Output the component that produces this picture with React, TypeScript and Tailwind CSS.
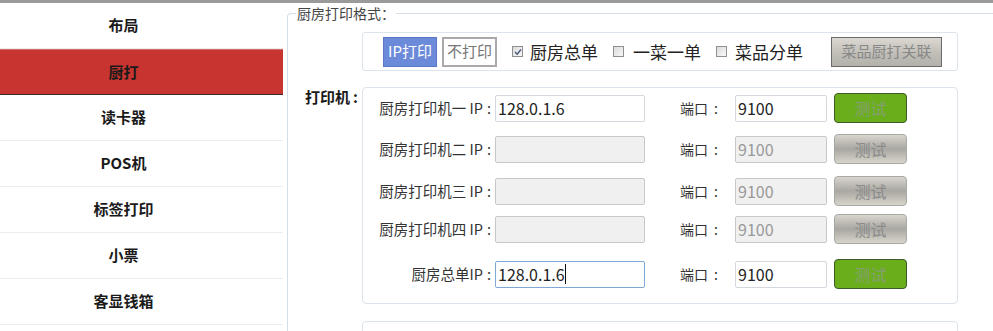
import React from "react";

const MENU = ["布局", "厨打", "读卡器", "POS机", "标签打印", "小票", "客显钱箱"];

type Row = {
  label: string;
  ip: string;
  port: string;
  enabled: boolean;
  focused?: boolean;
  mt: string;
};

const ROWS: Row[] = [
  { label: "厨房打印机一 IP", ip: "128.0.1.6", port: "9100", enabled: true, mt: "mt-[5px]" },
  { label: "厨房打印机二 IP", ip: "", port: "9100", enabled: false, mt: "mt-[11px]" },
  { label: "厨房打印机三 IP", ip: "", port: "9100", enabled: false, mt: "mt-[12px]" },
  { label: "厨房打印机四 IP", ip: "", port: "9100", enabled: false, mt: "mt-[8px]" },
  { label: "厨房总单IP", ip: "128.0.1.6", port: "9100", enabled: true, focused: true, mt: "mt-[15px]" },
];

function Check({ checked }: { checked?: boolean }) {
  return (
    <span className="w-[11px] h-[11px] border border-[#8f8f8f] bg-gradient-to-br from-[#dcdcdc] to-[#f8f8f8] flex items-center justify-center">
      {checked && (
        <svg width="8" height="8" viewBox="0 0 8 8">
          <path d="M1 4 L3.2 6.2 L7 1.5" fill="none" stroke="#4a5a7a" strokeWidth="1.4" />
        </svg>
      )}
    </span>
  );
}

function TestButton({ enabled }: { enabled: boolean }) {
  return enabled ? (
    <button className="w-[73px] h-[30px] rounded-[4px] border border-[#3d5a2a] bg-[#6aae1c] text-[16px] text-[#84a070]">
      测试
    </button>
  ) : (
    <button className="w-[73px] h-[30px] rounded-[4px] border border-[#a8a8a4] bg-gradient-to-b from-[#d9d5ce] via-[#a9a7a1] to-[#d7d5cb] text-[16px] text-[#8a8a8a]">
      测试
    </button>
  );
}

export default function App() {
  return (
    <div className="w-[993px] h-[331px] overflow-hidden bg-white text-[#333] font-['Noto_Sans_CJK_SC',sans-serif]">
      <div className="h-[3px] bg-[#9a9a9a]" />
      <div className="flex">
        <aside className="w-[283px] shrink-0">
          {MENU.map((m) =>
            m === "厨打" ? (
              <div
                key={m}
                className="h-[46px] pr-[36px] flex items-center justify-center bg-[#c8342f] border-t border-t-[#d96b66] border-b border-b-[#3a2a2a] text-[15px] font-bold text-[#1a1a1a]"
              >
                {m}
              </div>
            ) : (
              <div
                key={m}
                className="h-[46px] pr-[36px] flex items-center justify-center border-b border-[#ececec] text-[15px] font-bold text-[#1a1a1a]"
              >
                {m}
              </div>
            )
          )}
        </aside>

        <fieldset className="ml-[4px] flex-1 border-l border-t border-[#d6dee7] rounded-tl-[4px] min-h-[340px]">
          <legend className="ml-[8px] px-[1px] text-[14px] text-[#444] leading-[20px]">厨房打印格式：</legend>

          <div className="flex mt-[9px]">
            <div className="w-[74px]" />
            <div className="w-[596px] h-[39px] border border-[#dde3ea] rounded-[3px] flex items-center pl-[20px]">
              <span className="h-[30px] w-[54px] flex items-center justify-center bg-[#6b8ad9] border border-[#5b78c6] text-white text-[15px]">
                IP打印
              </span>
              <span className="ml-[5px] h-[30px] w-[55px] flex items-center justify-center bg-white border-2 border-[#a9a9a9] text-[#777] text-[15px]">
                不打印
              </span>
              <span className="ml-[15px]"><Check checked /></span>
              <span className="ml-[7px] text-[17px] text-[#222]">厨房总单</span>
              <span className="ml-[15px]"><Check /></span>
              <span className="ml-[9px] text-[17px] text-[#222]">一菜一单</span>
              <span className="ml-[15px]"><Check /></span>
              <span className="ml-[8px] text-[17px] text-[#222]">菜品分单</span>
              <button className="ml-[28px] w-[111px] h-[30px] border border-[#6a6a6a] bg-gradient-to-b from-[#dcd8d1] via-[#c2c0b9] to-[#b3b2aa] text-[15px] text-[#888]">
                菜品厨打关联
              </button>
            </div>
          </div>

          <div className="flex mt-[16px]">
            <div className="w-[74px] pl-[17px] whitespace-nowrap text-[15px] font-bold text-[#1a1a1a] leading-[20px]">
              打印机<span className="ml-[3px]">:</span>
            </div>
            <div className="w-[596px] h-[217px] border border-[#dde3ea] rounded-[4px] flex flex-col">
              {ROWS.map((r) => (
                <div key={r.label} className={`${r.mt} flex items-center h-[30px]`}>
                  <div className="w-[132px] whitespace-nowrap text-right text-[14.5px] text-[#333]">
                    {r.label}
                    <span className="inline-block w-[12px] text-center">:</span>
                  </div>
                  <div
                    className={
                      r.focused
                        ? "w-[150px] h-[27px] border border-[#80a8d4] bg-white rounded-[2px] flex items-center pl-[2px] text-[16px] text-[#222]"
                        : r.enabled
                        ? "w-[150px] h-[27px] border border-[#d4d8de] bg-white rounded-[2px] flex items-center pl-[2px] text-[16px] text-[#222]"
                        : "w-[150px] h-[27px] border border-[#c8c8c8] bg-[#f0f0f0] rounded-[2px]"
                    }
                  >
                    {r.ip}
                    {r.focused && <span className="w-px h-[20px] bg-[#111]" />}
                  </div>
                  <div className="ml-[35px] w-[55px] whitespace-nowrap text-[14px] text-[#333]">
                    端口<span className="ml-[6px]">:</span>
                  </div>
                  <div
                    className={
                      r.enabled
                        ? "w-[92px] h-[27px] border border-[#d4d8de] bg-white rounded-[2px] flex items-center pl-[2px] text-[16px] text-[#222]"
                        : "w-[92px] h-[27px] border border-[#c8c8c8] bg-[#f0f0f0] rounded-[2px] flex items-center pl-[2px] text-[16px] text-[#999]"
                    }
                  >
                    {r.port}
                  </div>
                  <div className="ml-[7px]">
                    <TestButton enabled={r.enabled} />
                  </div>
                </div>
              ))}
            </div>
          </div>

          <div className="flex mt-[17px]">
            <div className="w-[74px]" />
            <div className="w-[596px] h-[40px] border border-[#dde3ea] rounded-[4px]" />
          </div>
        </fieldset>
      </div>
    </div>
  );
}
